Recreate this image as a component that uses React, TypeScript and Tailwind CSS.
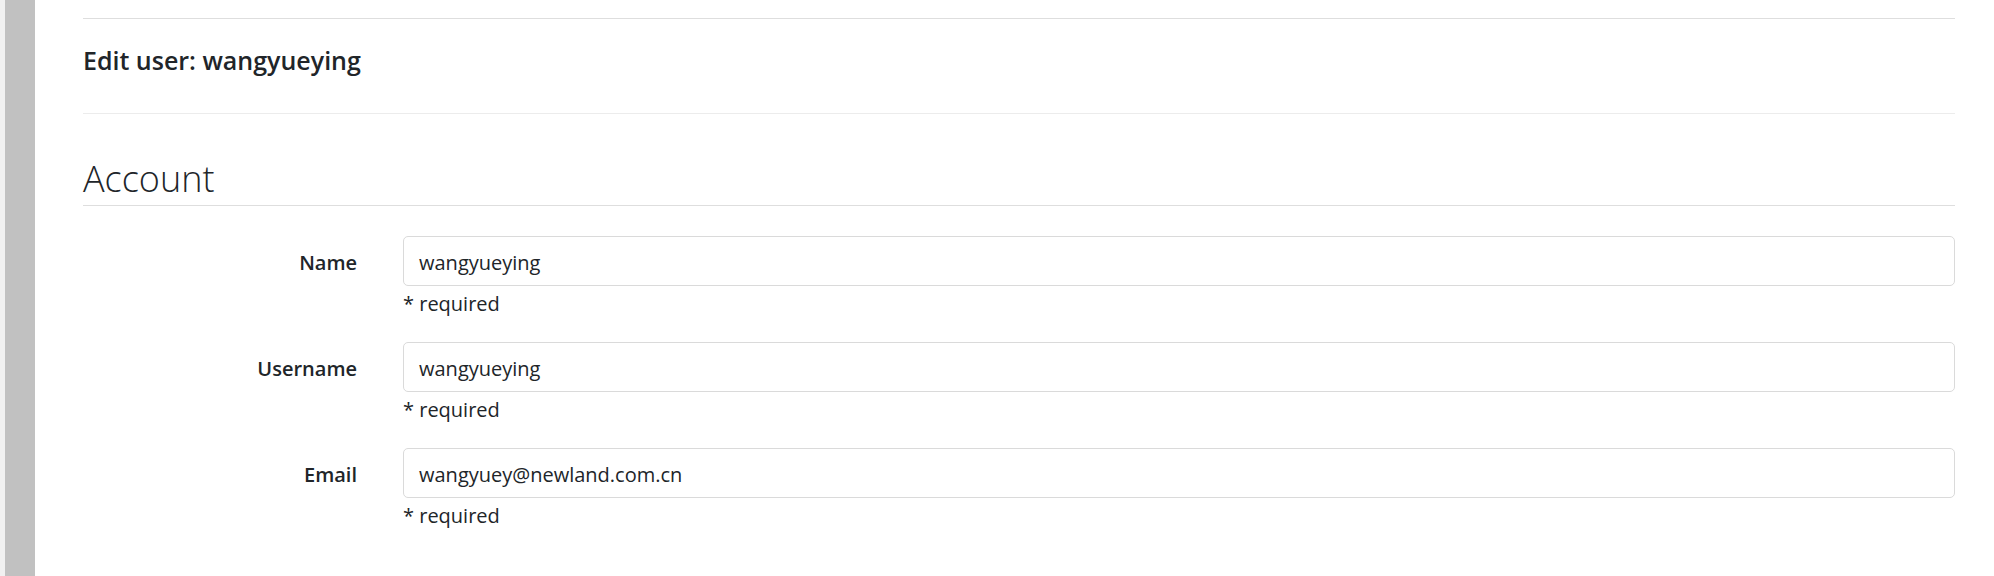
import React from "react";

const fields = [
  { label: "Name", value: "wangyueying" },
  { label: "Username", value: "wangyueying" },
  { label: "Email", value: "wangyuey@newland.com.cn" },
];

export default function App() {
  return (
    <div className="flex h-[576px] bg-white font-['Open_Sans',sans-serif] text-[#212529]">
      <div className="w-[5px] bg-[#f1f1f1]" />
      <div className="w-[30px] bg-[#c1c1c1]" />
      <main className="flex-1 pl-[48px] pr-[39px]">
        <div className="h-[18px]" />
        <div className="border-t border-b border-t-[#dedede] border-b-[#ececec] pt-[24px] pb-[36px]">
          <h1 className="text-[25px] leading-[34px] font-semibold">Edit user: wangyueying</h1>
        </div>

        <h2 className="mt-[43px] border-b border-[#dedede] pb-[4px] text-[36px] leading-[44px] font-light">
          Account
        </h2>

        <form className="mt-[30px]">
          {fields.map((f) => (
            <FieldRow key={f.label} label={f.label} value={f.value} />
          ))}
        </form>
      </main>
    </div>
  );
}

function FieldRow({ label, value }: { label: string; value: string }) {
  return (
    <div className="flex mb-[24px]">
      <label className="w-[320px] shrink-0 pr-[46px] pt-[4px] h-[50px] flex items-center justify-end text-[20px] font-semibold">
        {label}
      </label>
      <div className="flex-1">
        <div className="h-[50px] rounded-[5px] border border-[#dadada] flex items-center pl-[15px] pt-[3px] text-[20px]">
          {value}
        </div>
        <p className="mt-[4px] text-[20px] leading-[28px]">* required</p>
      </div>
    </div>
  );
}
